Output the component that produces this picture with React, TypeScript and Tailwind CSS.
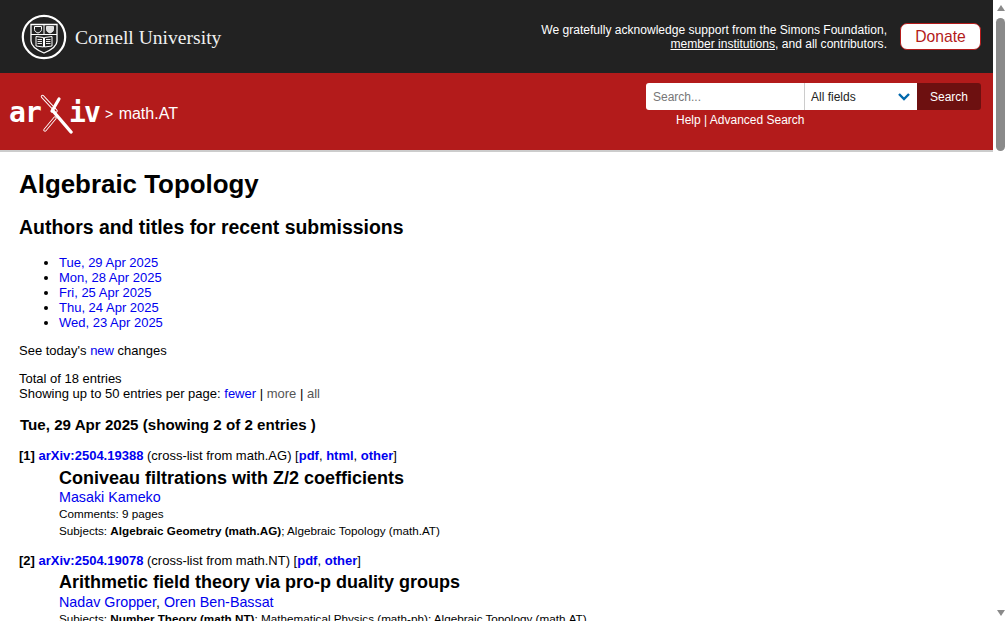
import React from "react";

const sans = "font-['Liberation_Sans',Arial,sans-serif]";
const link = "text-[#0000ee]";

function Seal() {
  return (
    <svg width="46" height="46" viewBox="0 0 46 46" className="shrink-0">
      <circle cx="23" cy="23" r="21.2" fill="none" stroke="#fff" strokeWidth="2.2" />
      <path d="M10 10.5H36V27C36 33 29 36.5 23 39C17 36.5 10 33 10 27Z" fill="none" stroke="#fff" strokeWidth="1.3" />
      <path d="M10 20.5H36" stroke="#fff" strokeWidth="1" />
      <path d="M23 10.5V20.5" stroke="#fff" strokeWidth="1" />
      <path d="M13.5 12.5H20.5V15.5C20.5 17.5 18.5 18.5 17 19C15.5 18.5 13.5 17.5 13.5 15.5Z" fill="none" stroke="#fff" strokeWidth="1" />
      <path d="M25.5 12.5H32.5V15.5C32.5 17.5 30.5 18.5 29 19C27.5 18.5 25.5 17.5 25.5 15.5Z" fill="#ddd" stroke="#fff" strokeWidth="0.8" />
      <path d="M15 22.5L22.5 23.5V33L15 32ZM31 22.5L23.5 23.5V33L31 32Z" fill="none" stroke="#fff" strokeWidth="1" />
      <path d="M16.5 25.5H21M16.5 27.5H21M16.5 29.5H21M25 25.5H29.5M25 27.5H29.5M25 29.5H29.5" stroke="#fff" strokeWidth="0.9" />
    </svg>
  );
}

const logoLetter = "absolute top-[5px] text-[28px] leading-[28px] font-bold text-white font-['DejaVu_Sans_Mono',monospace]";

function ArxivLogo() {
  return (
    <div className="relative w-[92px] h-[40px] shrink-0">
      <span className={`${logoLetter} left-[-1px]`}>a</span>
      <span className={`${logoLetter} left-[15px]`}>r</span>
      <span className={`${logoLetter} left-[59px]`}>i</span>
      <span className={`${logoLetter} left-[74px]`}>v</span>
      <svg width="92" height="40" viewBox="0 0 92 40" className="absolute left-0 top-0">
        <path d="M32.5 2.5L46 17" stroke="#fff" strokeWidth="3.4" strokeLinecap="round" />
        <path d="M32.5 2.5L46 17" stroke="#b31b1b" strokeWidth="1.6" strokeLinecap="round" />
        <path d="M35 36L45 24" stroke="#fff" strokeWidth="3.4" strokeLinecap="round" />
        <path d="M35 36L45 24" stroke="#b31b1b" strokeWidth="1.6" strokeLinecap="round" />
        <path d="M49 5L42 17" stroke="#fff" strokeWidth="3.2" strokeLinecap="round" />
        <path d="M43 17L61 38" stroke="#fff" strokeWidth="3.4" strokeLinecap="round" />
      </svg>
    </div>
  );
}

function Scrollbar() {
  return (
    <div className="w-[15px] h-full shrink-0 bg-white flex flex-col items-center pt-[5px]">
      <div className="w-0 h-0 border-x-[4.5px] border-x-transparent border-b-[6px] border-b-[#8a8a8a]" />
      <div className="w-[9px] h-[133px] mt-[7px] rounded-[5px] bg-[#8a8a8a]" />
      <div className="flex-1" />
      <div className="w-0 h-0 border-x-[4.5px] border-x-transparent border-t-[6px] border-t-[#8a8a8a] mb-[5px]" />
    </div>
  );
}

function Entry({ n, id, from, links, title, authors, comments, subjects, tight }: { n: number; id: string; from: string; links: string[]; title: React.ReactNode; authors: string[]; comments?: string; subjects: React.ReactNode; tight?: boolean }) {
  return (
    <div>
      <div className="text-[13px] leading-[15px] h-[15px]">
        <b>[{n}]</b> <a className={`${link} font-bold`}>arXiv:{id}</a> (cross-list from {from}) [
        {links.map((l, i) => (
          <span key={l}>{i > 0 && ", "}<a className={`${link} font-bold`}>{l}</a></span>
        ))}
        ]
      </div>
      <div className="pl-10">
        <div className={`text-[18px] font-bold leading-[22px] ${tight ? "mt-[3px]" : "mt-[4px]"}`}>{title}</div>
        <div className={`text-[14.3px] leading-[16px] ${tight ? "mt-[1px]" : ""}`}>
          {authors.map((a, i) => (
            <span key={a}>{i > 0 && ", "}<a className={link}>{a}</a></span>
          ))}
        </div>
        {comments && <div className="text-[11.7px] leading-[14px] mt-[2px]">{comments}</div>}
        <div className={`text-[11.7px] leading-[14px] ${tight ? "mt-[2px]" : "mt-[3px]"}`}>{subjects}</div>
      </div>
    </div>
  );
}

export default function App() {
  return (
    <div className={`${sans} w-[1008px] h-[621px] overflow-hidden flex bg-white text-black`}>
      <div className="w-[993px] h-full overflow-hidden shrink-0">
        <header className="h-[73px] bg-[#222222] flex items-center justify-between pl-[21px] pr-[12px]">
          <div className="flex items-center gap-[8px] mt-[1px]">
            <Seal />
            <span className="font-['Liberation_Serif',serif] text-[19.6px] text-[#f0f0f0] mt-[2px]">Cornell University</span>
          </div>
          <div className="flex items-center gap-[13px]">
            <div className="text-right text-[12.07px] leading-[14px] text-white">
              <div>We gratefully acknowledge support from the Simons Foundation,</div>
              <div><a className="underline">member institutions</a>, and all contributors.</div>
            </div>
            <div className="w-[81px] h-[27px] rounded-[7px] bg-white border border-[#b31b1b] text-[#b31b1b] text-[15.7px] flex items-center justify-center">Donate</div>
          </div>
        </header>
        <div className="h-[79px] bg-[#b31b1b] border-b-2 border-[#cccccc] flex justify-between pl-[10px] pr-[12px]">
          <div className="flex items-center gap-[4px] h-[77px] pt-[5px]">
            <ArxivLogo />
            <span className="text-white text-[16px] -ml-[1px]"><span className="text-[14px]">&gt;</span> <span className="ml-[1px]">math.AT</span></span>
          </div>
          <div className="pt-[10px] flex flex-col items-start">
            <div className="flex h-[27px] text-[12px]">
              <div className="w-[158px] bg-white rounded-l-[3px] text-[#777777] pl-[7px] flex items-center">Search...</div>
              <div className="w-[113px] bg-white border-l border-[#cccccc] text-[#222222] pl-[6px] pr-[6px] flex items-center justify-between">
                <span>All fields</span>
                <svg width="14" height="9" viewBox="0 0 14 9"><path d="M2 2L7 7L12 2" fill="none" stroke="#0068ac" strokeWidth="2.4" /></svg>
              </div>
              <div className="w-[64px] bg-[#6d1010] rounded-r-[3px] text-white flex items-center justify-center">Search</div>
            </div>
            <div className="text-white text-[12px] leading-[14px] mt-[3px] ml-[30px]">Help | Advanced Search</div>
          </div>
        </div>
        <main className="pl-[19px]">
          <h1 className="text-[25.9px] font-bold leading-[30px] mt-[17px]">Algebraic Topology</h1>
          <h2 className="text-[19.45px] font-bold leading-[24px] mt-[16px]">Authors and titles for recent submissions</h2>
          <ul className="list-disc pl-10 mt-[16px] text-[13px] leading-[15px] marker:text-black">
            {["Tue, 29 Apr 2025", "Mon, 28 Apr 2025", "Fri, 25 Apr 2025", "Thu, 24 Apr 2025", "Wed, 23 Apr 2025"].map((d) => (
              <li key={d}><a className={link}>{d}</a></li>
            ))}
          </ul>
          <p className="text-[13px] leading-[15px] mt-[13px]">See today's <a className={link}>new</a> changes</p>
          <p className="text-[13px] leading-[15px] mt-[13px]">Total of 18 entries<br />Showing up to 50 entries per page: <a className={link}>fewer</a> | <span className="text-[#555555]">more</span> | <span className="text-[#555555]">all</span></p>
          <h3 className="text-[15.13px] font-bold leading-[18px] mt-[15px] ml-[1px]">Tue, 29 Apr 2025 (showing 2 of 2 entries )</h3>
          <div className="mt-[14px] flex flex-col gap-[15px]">
            <Entry n={1} id="2504.19388" from="math.AG" links={["pdf", "html", "other"]} title="Coniveau filtrations with Z/2 coefficients" authors={["Masaki Kameko"]} comments="Comments: 9 pages" subjects={<>Subjects: <b>Algebraic Geometry (math.AG)</b>; Algebraic Topology (math.AT)</>} />
            <Entry tight n={2} id="2504.19078" from="math.NT" links={["pdf", "other"]} title="Arithmetic field theory via pro-p duality groups" authors={["Nadav Gropper", "Oren Ben-Bassat"]} subjects={<>Subjects: <b>Number Theory (math.NT)</b>; Mathematical Physics (math-ph); Algebraic Topology (math.AT)</>} />
          </div>
        </main>
      </div>
      <Scrollbar />
    </div>
  );
}
